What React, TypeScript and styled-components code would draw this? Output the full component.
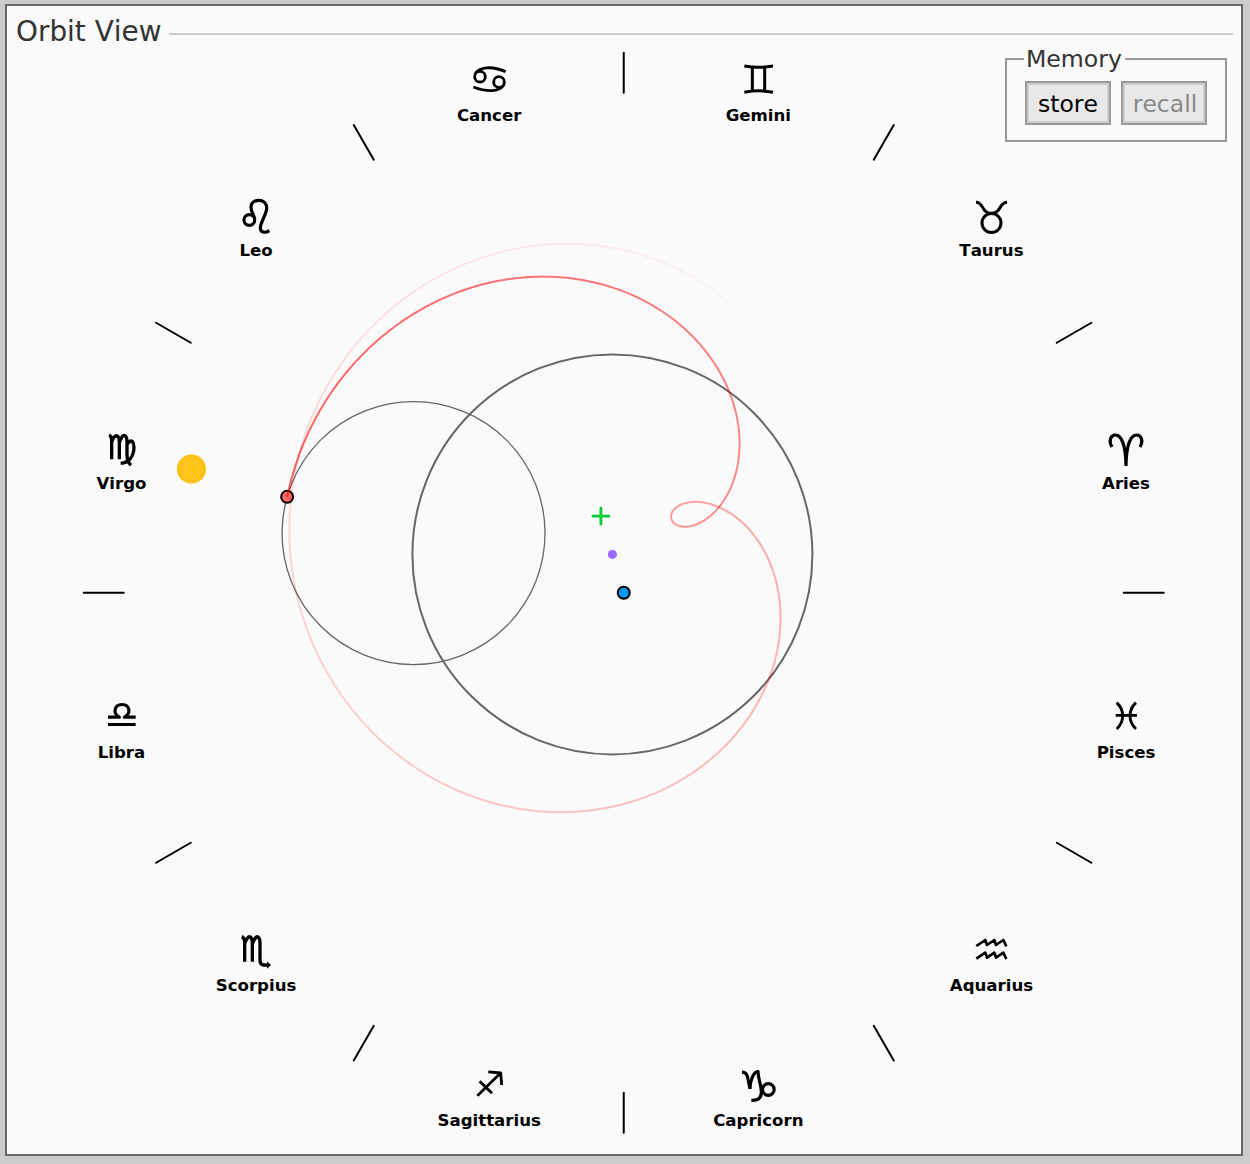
import React from 'react';
import styled, { createGlobalStyle } from 'styled-components';

const GlobalStyle = createGlobalStyle`
  * { box-sizing: border-box; }
  body { margin: 0; background: #ccc; font-family: Verdana, "DejaVu Sans", sans-serif; font-kerning: none; }
`;

const Page = styled.main`
  height: 1164px;
  padding: 4px 7px 8px 5px;
  display: flex;
`;

const Panel = styled.section`
  flex: 1;
  display: grid;
  border: 2px solid #666;
  background: #fafafa;
  overflow: hidden;
`;

const Chart = styled.svg`
  grid-area: 1 / 1;
  display: block;
  width: 1234px;
  height: 1148px;
`;

const Overlay = styled.div`
  grid-area: 1 / 1;
  display: flex;
  flex-direction: column;
  align-items: flex-end;
  padding: 8px 8px 0 9px;
`;

const Header = styled.header`
  align-self: stretch;
  display: flex;
  align-items: center;
  gap: 8px;
  height: 34px;
`;

const Title = styled.h1`
  margin: 0;
  padding-top: 1px;
  font-size: 27.9px;
  font-weight: 400;
  line-height: 34px;
  color: #333;
  white-space: nowrap;
`;

const Rule = styled.div`
  flex: 1;
  height: 2px;
  margin-top: 6px;
  background: #ccc;
`;

const Memory = styled.fieldset`
  width: 222px;
  height: 97px;
  margin: -3px 6px 0 0;
  padding: 8px 18px 0;
  border: 2px solid #999;
  display: flex;
  gap: 10px;
`;

const Legend = styled.legend`
  width: 101px;
  padding: 0 0 0 2px;
  margin-left: -1px;
  font-size: 23.6px;
  line-height: 28px;
  color: #333;
  white-space: nowrap;
`;

const Button = styled.button`
  width: 86px;
  height: 44px;
  padding: 2px 0 0;
  border: 2px solid #999;
  box-shadow: inset 0 0 0 2px #ccc;
  background: #e8e8e8;
  color: #000;
  font: 23.5px/36px Verdana, "DejaVu Sans", sans-serif;
  font-kerning: none;
  &:disabled { color: #888; padding-left: 2px; }
`;

const SignName = styled.text`
  font: bold 16.6px Verdana, "DejaVu Sans", sans-serif;
  font-kerning: none;
  text-anchor: middle;
`;

const Glyph = styled.g<{ $weight: number }>`
  fill: none;
  stroke: #000;
  stroke-width: ${(p) => p.$weight};
  stroke-linejoin: round;
`;

type Point = { x: number; y: number };

const EARTH: Point = { x: 623.75, y: 592.75 };
const CENTER: Point = { x: 612.4, y: 554.4 };
const EQUANT: Point = { x: 600.9, y: 516.2 };
const SUN: Point = { x: 191.5, y: 469 };
const DEFERENT = 200;
const EPICYCLE = 131.5;
const SUN_ANGLE = 164;
const MEAN_ANGLE = 185.15;
const RATE = 0.5317;
const TRAIL = 869.5;

const rad = (d: number) => (d * Math.PI) / 180;
const polar = (o: Point, r: number, d: number): Point => ({
  x: o.x + r * Math.cos(rad(d)),
  y: o.y - r * Math.sin(rad(d)),
});

function epicycleCenter(back: number): Point {
  const a = rad(MEAN_ANGLE - RATE * back);
  const ux = Math.cos(a);
  const uy = -Math.sin(a);
  const dx = EQUANT.x - CENTER.x;
  const dy = EQUANT.y - CENTER.y;
  const b = dx * ux + dy * uy;
  const t = -b + Math.sqrt(b * b - dx * dx - dy * dy + DEFERENT * DEFERENT);
  return { x: EQUANT.x + t * ux, y: EQUANT.y + t * uy };
}

const planetAt = (back: number) => polar(epicycleCenter(back), EPICYCLE, SUN_ANGLE - back);

const CHUNKS = 100;
const STEPS = 8;
const trail = Array.from({ length: CHUNKS }, (_, i) => ({
  opacity: 0.025 + 0.575 * (1 - (i + 0.5) / CHUNKS),
  points: Array.from({ length: STEPS + 1 }, (_, j) => {
    const p = planetAt((TRAIL * (i + j / STEPS)) / CHUNKS);
    return `${p.x.toFixed(2)},${p.y.toFixed(2)}`;
  }).join(' '),
}));

type Sign = { name: string; ox: number; oy: number; d: string; weight?: number; tip?: string };

// Glyph paths are in thirds of a pixel, measured from (ox, oy) on the chart.
const ring = (cx: number, cy: number, r: number) =>
  `M${cx - r} ${cy}a${r} ${r} 0 1 0 ${2 * r} 0a${r} ${r} 0 1 0 ${-2 * r} 0`;

const SIGNS: Sign[] = [
  { name: 'Aries', ox: 940, oy: 180, weight: 9.5, d: 'M516 801C505 783 512 765 526 765C545 765 557 796 558 858M600 801C611 783 604 765 590 765C571 765 559 796 558 858' },
  { name: 'Taurus', ox: 940, oy: 180, weight: 9, d: ring(154.5, 129, 28.5) + 'M108 67C132 67 124 100 154 100C184 100 177 67 201 67' },
  { name: 'Gemini', ox: 420, oy: 40, weight: 9, d: 'M973 78Q1016 86 1059 78M973 157Q1016 148 1059 157M997 82V154M1034 82V154' },
  { name: 'Cancer', ox: 420, oy: 40, weight: 8.5, d: ring(180, 110, 16) + ring(237, 126, 16) + 'M165 102C178 80 215 77 257 95M160 141C202 157 240 156 252 134' },
  { name: 'Leo', ox: 80, oy: 180, weight: 9.5, d: ring(508, 120, 16) + 'M524 116C522 104 513 96 513 82C513 68 524 61 537 61C552 61 561 72 560 86C559 103 541 128 541 144C541 158 556 160 568 152' },
  { name: 'Virgo', ox: 80, oy: 180, weight: 10, d: 'M87 765Q95 768 95 782V838M95 786Q104 763 112 768Q118 772 118 785V838M118 788Q127 762 135 767Q141 771 141 785V825Q141 845 153 856M141 793Q150 780 157 784Q162 790 162 803C161 828 148 848 122 850' },
  { name: 'Libra', ox: 80, oy: 680, weight: 9.5, d: 'M84 133.5H167M84 111.5H118C97 100 103 73.5 126 73.5C149 73.5 155 100 133 111.5H167' },
  { name: 'Scorpius', ox: 80, oy: 680, weight: 10, d: 'M485 770Q494 773 494 786V845M494 790Q503 767 511 771Q517 775 517 788V845M517 792Q526 767 534 771Q540 775 540 788V840Q540 855 552 855H563', tip: 'M561 844L573 855L561 866Z' },
  { name: 'Sagittarius', ox: 420, oy: 1050, weight: 8.5, d: 'M172 137L241 70M205 65.5L242 69L245 105M179 94L216 130' },
  { name: 'Capricorn', ox: 420, oy: 1050, weight: 9.5, d: ring(1045, 118.5, 17.5) + 'M966 66.5Q979 66 983 82L990 117M990 117C990 92 1000 66 1014 65C1015 95 1028 112 1023 135C1019 150 1007 151 994 151' },
  { name: 'Aquarius', ox: 940, oy: 680, weight: 8, d: 'M109 798L136 780L141 795L163 780L168 795L190 780L199 799M109 836L136 818L141 833L163 818L168 833L190 818L199 837' },
  { name: 'Pisces', ox: 940, oy: 680, weight: 8.5, d: 'M530 68C554 90 554 125 530 147M588 68C564 90 564 125 588 147M527 106H591' },
];

export default function App() {
  const hub = epicycleCenter(0);
  const planet = planetAt(0);
  return (
    <Page>
      <GlobalStyle />
      <Panel>
        <Chart viewBox="7 6 1234 1148">
          <defs>
            <radialGradient id="sun">
              <stop offset="0" stopColor="#ffc81e" />
              <stop offset="0.6" stopColor="#ffc71f" />
              <stop offset="1" stopColor="#ffbe0c" />
            </radialGradient>
          </defs>
          {SIGNS.map((sign, i) => {
            const a = polar(EARTH, 500, i * 30);
            const b = polar(EARTH, 540, i * 30);
            const c = polar(EARTH, 520, i * 30 + 15);
            return (
              <g key={sign.name}>
                <line x1={a.x} y1={a.y} x2={b.x} y2={b.y} stroke="#000" strokeWidth={2} strokeLinecap="round" />
                <Glyph $weight={sign.weight ?? 9} transform={`translate(${sign.ox} ${sign.oy}) scale(${1 / 3})`}>
                  <path d={sign.d} />
                  {sign.tip && <path d={sign.tip} fill="#000" stroke="none" />}
                </Glyph>
                <SignName x={c.x} y={c.y + 30.7}>{sign.name}</SignName>
              </g>
            );
          })}
          <circle cx={CENTER.x} cy={CENTER.y} r={DEFERENT} fill="none" stroke="#666" strokeWidth={2} />
          <circle cx={hub.x} cy={hub.y} r={EPICYCLE} fill="none" stroke="#666" strokeWidth={1.3} />
          <path d={`M${EQUANT.x - 8} ${EQUANT.y}h16M${EQUANT.x} ${EQUANT.y - 8}v16`} stroke="#0c3" strokeWidth={2.8} strokeLinecap="round" />
          <circle cx={CENTER.x} cy={CENTER.y} r={4.5} fill="#96f" />
          <circle cx={EARTH.x} cy={EARTH.y} r={6} fill="#09f" stroke="#000" strokeWidth={2} />
          <circle cx={SUN.x} cy={SUN.y} r={14.5} fill="url(#sun)" />
          <circle cx={SUN.x + 2} cy={SUN.y + 0.3} r={4} fill="#ffc30a" />
          <circle cx={planet.x} cy={planet.y} r={6} fill="#f66" stroke="#000" strokeWidth={2} />
          {trail.map((t, i) => (
            <polyline key={i} points={t.points} fill="none" stroke="#f00" strokeWidth={2} strokeOpacity={t.opacity} />
          ))}
        </Chart>
        <Overlay>
          <Header>
            <Title>Orbit View</Title>
            <Rule />
          </Header>
          <Memory>
            <Legend>Memory</Legend>
            <Button>store</Button>
            <Button disabled>recall</Button>
          </Memory>
        </Overlay>
      </Panel>
    </Page>
  );
}
